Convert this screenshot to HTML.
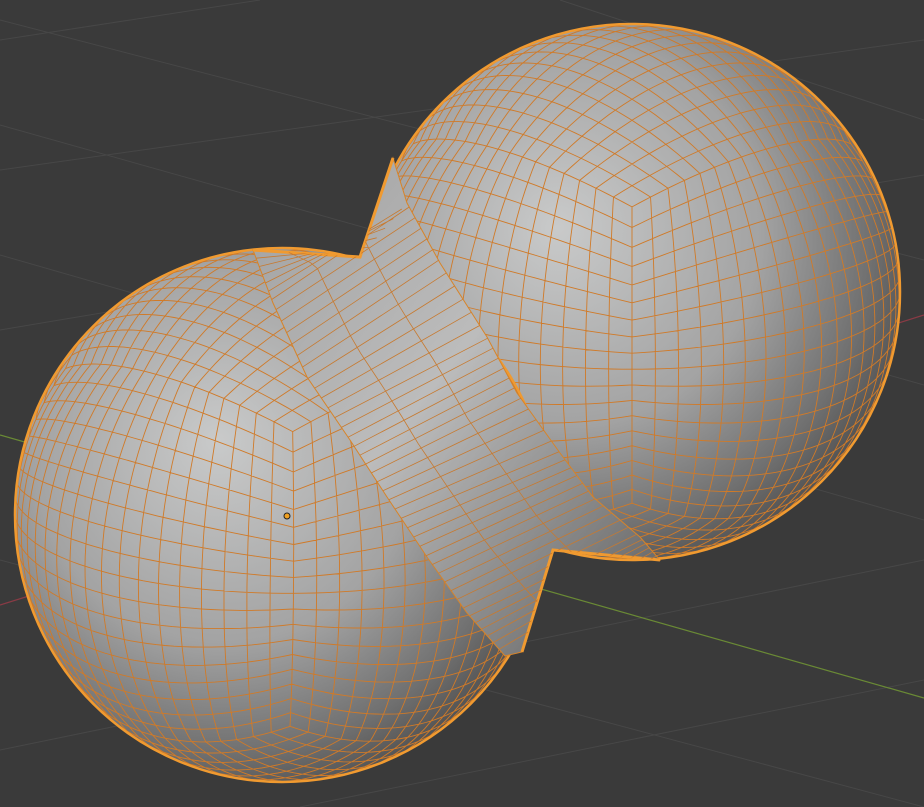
<!DOCTYPE html>
<html><head><meta charset="utf-8"><style>html,body{margin:0;padding:0;background:#3a3a3a;overflow:hidden}svg{display:block}</style></head>
<body>
<svg id="s" width="924" height="807" viewBox="0 0 924 807" xmlns="http://www.w3.org/2000/svg">
<defs>
<radialGradient id="gl" cx="0.4" cy="0.4" r="0.65" fx="0.38" fy="0.36">
<stop offset="0" stop-color="#c9caca"/><stop offset="0.55" stop-color="#a3a3a3"/><stop offset="0.85" stop-color="#707070"/><stop offset="1" stop-color="#505050"/></radialGradient>
<radialGradient id="gr" cx="0.4" cy="0.4" r="0.65" fx="0.36" fy="0.38">
<stop offset="0" stop-color="#c9caca"/><stop offset="0.55" stop-color="#a3a3a3"/><stop offset="0.85" stop-color="#707070"/><stop offset="1" stop-color="#505050"/></radialGradient>
<linearGradient id="gn" x1="0" y1="0" x2="1" y2="1">
<stop offset="0" stop-color="#a0a0a0"/><stop offset="0.45" stop-color="#bcbcbc"/><stop offset="0.8" stop-color="#808080"/><stop offset="1" stop-color="#585858"/></linearGradient>
<clipPath id="cl"><circle cx="282" cy="515" r="267"/></clipPath>
<clipPath id="cr"><circle cx="632" cy="292" r="268"/></clipPath>
<clipPath id="cn"><polygon points="253,250 360,257 393,158 407,203 440,263 487,337 517,393 560,453 593,497 640,537 660,560 553,550 522,652 505,656 467,613 427,557 387,497 350,440 307,377 273,303"/></clipPath>
</defs>
<rect width="924" height="807" fill="#3a3a3a"/>
<g stroke="#474747" stroke-width="1">
<line x1="0" y1="40" x2="260" y2="0"/><line x1="0" y1="170" x2="924" y2="40"/>
<line x1="0" y1="330" x2="924" y2="175"/><line x1="0" y1="750" x2="924" y2="560"/>
<line x1="300" y1="807" x2="924" y2="680"/><line x1="0" y1="255" x2="924" y2="520"/>
<line x1="0" y1="125" x2="924" y2="385"/><line x1="0" y1="20" x2="924" y2="260"/>
<line x1="0" y1="560" x2="924" y2="807"/><line x1="560" y1="0" x2="924" y2="120"/>
</g>
<line x1="0" y1="435" x2="924" y2="698" stroke="#6a8a35" stroke-width="1.2"/>
<line x1="0" y1="605" x2="924" y2="315" stroke="#8a3a45" stroke-width="1.2"/>
<circle cx="632" cy="292" r="268" fill="url(#gr)"/>
<g id="wr" clip-path="url(#cr)"></g>
<circle cx="632" cy="292" r="268" fill="none" stroke="#f09a30" stroke-width="2.5"/>
<circle cx="282" cy="515" r="267" fill="url(#gl)"/>
<g id="wl" clip-path="url(#cl)"></g>
<circle cx="282" cy="515" r="267" fill="none" stroke="#f09a30" stroke-width="2.5"/>
<polygon points="253,250 360,257 393,158 407,203 440,263 487,337 517,393 560,453 593,497 640,537 660,560 553,550 522,652 505,656 467,613 427,557 387,497 350,440 307,377 273,303" fill="url(#gn)" stroke="#d88428" stroke-width="1"/>
<polyline points="253,250 360,257 393,158" fill="none" stroke="#f09a30" stroke-width="3"/>
<polyline points="660,560 553,550 522,652" fill="none" stroke="#f09a30" stroke-width="3"/>
<g id="wn" stroke="#c77a30" stroke-width="0.8" fill="none" clip-path="url(#cn)"></g>
<circle cx="287" cy="516" r="3" fill="#f0a020" stroke="#222" stroke-width="1"/>
</svg>
<script>
(function(){
var NS="http://www.w3.org/2000/svg";
function norm(a){var l=Math.hypot(a[0],a[1],a[2]);return [a[0]/l,a[1]/l,a[2]/l];}
function add(a,b,k){return [a[0]+b[0]*k,a[1]+b[1]*k,a[2]+b[2]*k];}
function cross(a,b){return [a[1]*b[2]-a[2]*b[1],a[2]*b[0]-a[0]*b[2],a[0]*b[1]-a[1]*b[0]];}
function sphere(gid,cx,cy,r,c1,c2){
 c1=[c1[0],c1[1],Math.sqrt(1-c1[0]*c1[0]-c1[1]*c1[1])];
 c2=[c2[0],c2[1],Math.sqrt(1-c2[0]*c2[0]-c2[1]*c2[1])];
 var u=norm(add(c1,c2,1)),v=norm(add(c1,c2,-1)),w=cross(u,v);
 var X=norm(add(u,w,1)),Z=norm(add(u,w,-1)),Y=v;
 var g=document.getElementById(gid),d="";
 var N=18,M=40;
 var faces=[[0,1,2],[1,2,0],[2,0,1]];
 for(var f=0;f<3;f++)for(var sg=-1;sg<=1;sg+=2)for(var i=0;i<=N;i++)for(var dir=0;dir<2;dir++){
  var t=Math.tan((-1+2*i/N)*Math.PI/4);var pen=false;
  for(var j=0;j<=M;j++){
   var s=Math.tan((-1+2*j/M)*Math.PI/4);
   var p=[0,0,0];var ax=faces[f];
   p[ax[0]]=sg;p[ax[1]]=dir?t:s;p[ax[2]]=dir?s:t;
   p=norm(p);
   var q=[X[0]*p[0]+Y[0]*p[1]+Z[0]*p[2],X[1]*p[0]+Y[1]*p[1]+Z[1]*p[2],X[2]*p[0]+Y[2]*p[1]+Z[2]*p[2]];
   if(q[2]>-0.02){var x=(cx+q[0]*r).toFixed(1),y=(cy+q[1]*r).toFixed(1);d+=(pen?"L":"M")+x+" "+y;pen=true;}else pen=false;
  }
 }
 var pa=document.createElementNS(NS,"path");pa.setAttribute("d",d);pa.setAttribute("fill","none");
 pa.setAttribute("stroke","#d07a28");pa.setAttribute("stroke-width","0.9");g.appendChild(pa);
}
sphere("wl",282,515,267,[0.04,-0.31],[0.03,0.79]);
sphere("wr",632,292,268,[0.0,-0.305],[0.0,0.78]);
var L=[[253,250],[273,303],[307,377],[350,440],[387,497],[427,557],[467,613],[505,656]],
    R=[[360,257],[407,203],[440,263],[487,337],[517,393],[560,453],[593,497],[640,537],[660,560]];
function lerp(P,t){var n=P.length-1,k=Math.min(Math.floor(t*n),n-1),f=t*n-k;return [P[k][0]+(P[k+1][0]-P[k][0])*f,P[k][1]+(P[k+1][1]-P[k][1])*f];}
var d="",wn=document.getElementById("wn");
for(var i=1;i<45;i++){var a=lerp(L,i/45),b=lerp(R,i/45);d+="M"+a[0].toFixed(1)+" "+a[1].toFixed(1)+"L"+b[0].toFixed(1)+" "+b[1].toFixed(1);}
for(var k=1;k<3;k++){var tt=k/3;d+="M";for(var i=0;i<=30;i++){var a=lerp(L,i/30),b=lerp(R,i/30);d+=(i?"L":"")+(a[0]+(b[0]-a[0])*tt).toFixed(1)+" "+(a[1]+(b[1]-a[1])*tt).toFixed(1);}}
var pth=document.createElementNS(NS,"path");pth.setAttribute("d",d);wn.appendChild(pth);
})();
</script>
</body></html>
